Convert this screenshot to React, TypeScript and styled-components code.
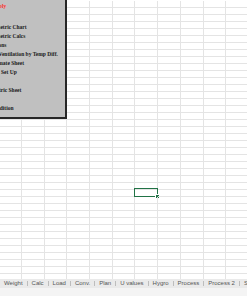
import React from "react";
import styled, { createGlobalStyle } from "styled-components";

const Global = createGlobalStyle`
  html, body { margin: 0; padding: 0; background: #ffffff; }
  body { width: 247px; height: 296px; overflow: hidden; }
`;

const Window = styled.div`
  width: 247px;
  height: 296px;
  display: flex;
  flex-direction: column;
  overflow: hidden;
  font-family: "Liberation Sans", Arial, sans-serif;
`;

const Sheet = styled.div`
  position: relative;
  flex: 1;
  overflow: hidden;
  background: #ffffff;
`;

const Grid = styled.div`
  display: grid;
  grid-template-columns: repeat(11, 22.7px);
  grid-auto-rows: 7px;
  margin-left: -0.7px;
  margin-top: 1px;
`;

const Cell = styled.div`
  position: relative;
  box-sizing: border-box;
  border-right: 1px solid #e4e4e4;
  border-bottom: 1px solid #e4e4e4;
`;

const Selection = styled.div`
  position: absolute;
  left: -1.5px;
  top: -2px;
  right: -0.5px;
  bottom: -1px;
  border: 1.5px solid #217346;
  box-sizing: border-box;
`;

const FillHandle = styled.div`
  position: absolute;
  right: -3px;
  bottom: -3px;
  width: 3px;
  height: 3px;
  background: #217346;
  border: 0.5px solid #ffffff;
`;

const Panel = styled.div`
  position: absolute;
  left: 0;
  top: 0;
  width: 67px;
  height: 119px;
  box-sizing: border-box;
  background: #c0c0c0;
  border-right: 2px solid #262626;
  border-bottom: 2px solid #262626;
  overflow: hidden;
`;

const MenuList = styled.div`
  display: flex;
  flex-direction: column;
  margin-left: -23px;
  padding-top: 1.5px;
  font-family: "Liberation Serif", "Times New Roman", serif;
  font-weight: bold;
  font-size: 5.5px;
  white-space: nowrap;
`;

const MenuItem = styled.div<{ $red?: boolean; $gapAfter?: number }>`
  height: 9px;
  line-height: 9px;
  color: ${(p) => (p.$red ? "#ff2a2a" : "#1a1a1a")};
  margin-bottom: ${(p) => p.$gapAfter ?? 0}px;
`;

const TabBar = styled.div`
  height: 9px;
  background: #eaeaea;
  display: flex;
  align-items: center;
  white-space: nowrap;
  overflow: hidden;
`;

const Tab = styled.div`
  padding: 0 4px;
  font-size: 6px;
  color: #555555;
  line-height: 9px;
`;

const TabSep = styled.div`
  width: 1px;
  height: 5px;
  background: #bdbdbd;
  flex: none;
`;

const StatusStrip = styled.div`
  height: 8px;
  background: #f4f4f4;
`;

const ROWS = 40;
const COLS = 11;
const SEL_ROW = 27;
const SEL_COL = 6;

const menu: { text: string; red?: boolean; gap?: number }[] = [
  { text: "Duct Supply", red: true, gap: 12 },
  { text: "Psychrometric Chart" },
  { text: "Psychrometric Calcs" },
  { text: "Calculations" },
  { text: "Building Ventilation by Temp Diff." },
  { text: "Cost Estimate Sheet" },
  { text: "Drawings Set Up", gap: 9 },
  { text: "Hygrometric Sheet", gap: 9 },
  { text: "Steam Addition" },
];

const tabs = ["Weight", "Calc", "Load", "Conv.", "Plan", "U values", "Hygro", "Process", "Process 2", "S"];

export default function App() {
  const cells = [];
  for (let r = 0; r < ROWS; r++) {
    for (let c = 0; c < COLS; c++) {
      const sel = r === SEL_ROW && c === SEL_COL;
      cells.push(
        <Cell key={`${r}-${c}`}>
          {sel && (
            <Selection>
              <FillHandle />
            </Selection>
          )}
        </Cell>
      );
    }
  }
  return (
    <>
      <Global />
      <Window>
        <Sheet>
          <Grid>{cells}</Grid>
          <Panel>
            <MenuList>
              {menu.map((m) => (
                <MenuItem key={m.text} $red={m.red} $gapAfter={m.gap}>
                  {m.text}
                </MenuItem>
              ))}
            </MenuList>
          </Panel>
        </Sheet>
        <TabBar>
          {tabs.map((t, i) => (
            <React.Fragment key={t}>
              {i > 0 && <TabSep />}
              <Tab>{t}</Tab>
            </React.Fragment>
          ))}
        </TabBar>
        <StatusStrip />
      </Window>
    </>
  );
}
